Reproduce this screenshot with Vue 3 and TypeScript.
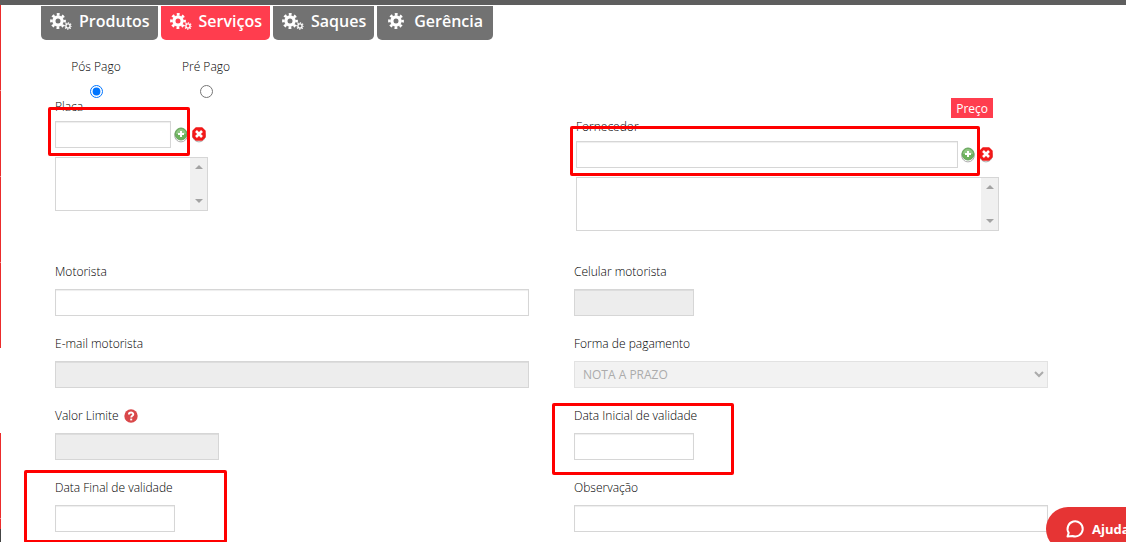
<script setup lang="ts">
import { ref } from 'vue'

interface Tab { name: string; double: boolean }
interface Picker { id: string; label: string }

const tabs: Tab[] = [
  { name: 'Produtos', double: true },
  { name: 'Serviços', double: true },
  { name: 'Saques', double: true },
  { name: 'Gerência', double: false },
]
const pickers: Picker[] = [
  { id: 'placa', label: 'Placa' },
  { id: 'fornecedor', label: 'Fornecedor' },
]
const active = ref('Serviços')
const payment = ref('pos')
</script>

<template>
  <div class="page">
    <aside class="rail" aria-hidden="true">
      <i class="menu"></i><i class="blank"></i><i class="menu short"></i><i class="foot"></i>
    </aside>
    <div class="main">
      <nav class="tabs">
        <button
          v-for="t in tabs"
          :key="t.name"
          type="button"
          :class="['tab', { active: t.name === active, single: !t.double }]"
          @click="active = t.name"
        >
          <svg :width="t.double ? 22 : 16" height="18" :viewBox="t.double ? '0 0 22 18' : '0 0 16 18'" aria-hidden="true">
            <g fill="none" stroke="#fff">
              <circle cx="8" cy="9" r="4.1" stroke-width="3.2" />
              <circle cx="8" cy="9" r="6.6" stroke-width="2.600" stroke-dasharray="2.800 2.384" stroke-dashoffset="1.4" />
              <template v-if="t.double">
                <circle cx="18" cy="14" r="2.1" stroke-width="1.4" />
                <circle cx="18" cy="14" r="3.2" stroke-width="1.2" stroke-dasharray="1.26 1.26" stroke-dashoffset="0.6" />
              </template>
            </g>
          </svg>
          <span>{{ t.name }}</span>
        </button>
      </nav>

      <form class="form" @submit.prevent>
        <div class="modes">
          <label class="mode">Pós Pago<input v-model="payment" type="radio" name="modo" value="pos" /></label>
          <label class="mode">Pré Pago<input v-model="payment" type="radio" name="modo" value="pre" /></label>
        </div>

        <div class="grid pickers">
          <div v-for="p in pickers" :key="p.id" :class="['picker', p.id]">
            <button v-if="p.id === 'fornecedor'" type="button" class="price">Preço</button>
            <label :for="p.id">{{ p.label }}</label>
            <div class="entry">
              <input :id="p.id" type="text" class="box" />
              <button type="button" class="icon" aria-label="Adicionar">
                <svg width="14" height="16" viewBox="0 0 14 16">
                  <circle cx="7" cy="8.6" r="6.3" fill="#fff" stroke="#999" stroke-width="0.8" />
                  <circle cx="7" cy="7" r="6" fill="#6cb25c" stroke="#69a35f" />
                  <path d="M2 7a5 5 0 0 1 10 0z" fill="#8fc783" />
                  <path d="M7 4v6M4 7h6" stroke="#fff" stroke-width="2" />
                </svg>
              </button>
              <button type="button" class="icon" aria-label="Remover">
                <svg width="14" height="16" viewBox="0 0 14 16">
                  <circle cx="7" cy="8.6" r="6.3" fill="#fff" stroke="#999" stroke-width="0.8" />
                  <path d="M4 1h6l3 3v6l-3 3H4l-3-3V4z" fill="#f51c1c" stroke="#f01818" stroke-width="1.400" stroke-linejoin="round" />
                  <path d="M4 4l6 6M10 4l-6 6" stroke="#fff" stroke-width="2.600" />
                </svg>
              </button>
              <div class="mark" aria-hidden="true"></div>
            </div>
            <div class="list">
              <select multiple :aria-label="p.label + ' selecionados'"></select>
              <div class="scroll" aria-hidden="true">
                <svg width="8" height="4" viewBox="0 0 8 4"><path d="M0 4L4 0l4 4z" fill="#a3a3a3" /></svg>
                <svg width="8" height="4" viewBox="0 0 8 4"><path d="M0 0l4 4 4-4z" fill="#a3a3a3" /></svg>
              </div>
            </div>
          </div>
        </div>

        <div class="grid fields">
          <div class="field">
            <label for="motorista">Motorista</label>
            <input id="motorista" type="text" class="box" />
          </div>
          <div class="field">
            <label for="celular">Celular motorista</label>
            <input id="celular" type="text" class="box date" disabled />
          </div>
          <div class="field">
            <label for="email">E-mail motorista</label>
            <input id="email" type="text" class="box" disabled />
          </div>
          <div class="field">
            <label for="forma">Forma de pagamento</label>
            <select id="forma" class="box pay" disabled><option>NOTA A PRAZO</option></select>
          </div>
          <div class="field">
            <label for="limite">Valor Limite
              <svg class="help" width="14" height="14" viewBox="0 0 14 14" aria-hidden="true">
                <circle cx="7" cy="7" r="6.700" fill="#d9484a" />
                <path d="M4.900 5.400C4.900 2.900 9.300 3 9.300 5.300 9.300 6.900 7.200 6.700 7.200 8.500" fill="none" stroke="#fff" stroke-width="1.900" />
                <path d="M6.200 9.600h2v1.800h-2z" fill="#fff" />
              </svg>
            </label>
            <input id="limite" type="text" class="box limit" disabled />
          </div>
          <div class="field">
            <label for="inicial">Data Inicial de validade</label>
            <input id="inicial" type="text" class="box date" />
            <div class="mark start" aria-hidden="true"></div>
          </div>
          <div class="field">
            <label for="final">Data Final de validade</label>
            <input id="final" type="text" class="box date" />
            <div class="mark end" aria-hidden="true"></div>
          </div>
          <div class="field">
            <label for="obs">Observação</label>
            <input id="obs" type="text" class="box" />
          </div>
        </div>
      </form>
    </div>

    <button type="button" class="chat">
      <svg width="20" height="20" viewBox="0 0 20 20" aria-hidden="true">
        <path d="M2.500 17.500l1.200-3.600A7.600 7.600 0 1 1 7.500 17z" fill="none" stroke="#fff" stroke-width="2" stroke-linejoin="round" />
      </svg>
      <span>Ajuda</span>
    </button>
  </div>
</template>

<style>
html, body { margin: 0; background: #fff; overflow: hidden; }
</style>

<style scoped>
* { box-sizing: border-box; }
.page {
  display: flex;
  height: 100vh;
  overflow: hidden;
  border-top: 5px solid #5e5e5e;
  font: 300 12px/18px "Open Sans", "Noto Sans", sans-serif;
  color: #000;
}
button, input, select { font-family: inherit; margin: 0; }
button { border: 0; padding: 0; cursor: pointer; }

.rail { display: flex; flex-direction: column; flex: none; width: 1px; }
.menu { flex: 343 0 0; background: repeating-linear-gradient(#eb2c2c 0 85px, #f58a8a 85px 86px); }
.menu.short { flex-grow: 96; }
.blank { flex: 85 0 0; }
.foot { flex: 13 0 0; background: #444; }

.main { flex: 1; min-width: 0; padding-top: 1px; }
.tabs { display: flex; gap: 3px; padding-left: 40px; }
.tab {
  display: flex;
  align-items: center;
  gap: 7px;
  height: 34px;
  padding: 0 8px 4px 9px;
  border-radius: 0 0 5px 5px;
  background: #727272;
  color: #fff;
  font-size: 16px;
  font-weight: 600;
}
.tab.single { gap: 10px; padding: 0 10px 4px 11px; }
.tab.active { background: #ff3d4e; }

.form { padding: 18px 78px 0 54px; }
.modes { display: flex; gap: 28px; }
.mode { display: flex; flex-direction: column; align-items: center; gap: 9px; width: 82px; }
.mode input { width: 13px; height: 13px; }

.grid { display: grid; grid-template-columns: 1fr 1fr; column-gap: 45px; }
.picker { display: flex; flex-direction: column; align-items: flex-start; }
.placa { width: 153px; }
.fornecedor { margin: 0 49px 0 2px; }
.price {
  align-self: flex-end;
  height: 20px;
  margin-right: 6px;
  padding: 0 5px;
  background: #ff3d4e;
  color: #fff;
  font-size: 12px;
  font-weight: 400;
}
.entry { position: relative; display: flex; align-items: center; align-self: stretch; gap: 3px; margin-top: 5px; padding-right: 2px; }
.fornecedor .entry { padding-right: 6px; }
.entry .box { flex: 1; min-width: 0; }
.icon { display: flex; background: none; }
.icon + .icon { margin-left: 1px; }
.box {
  display: block;
  width: 100%;
  height: 27px;
  padding: 0 8px;
  border: 1px solid #d6d6d6;
  border-radius: 0;
  outline: 0;
  background: #fff;
  box-shadow: inset 0 1px 1px #eee;
  font-size: 12px;
}
.box:disabled { background: #ededed; box-shadow: inset 0 1px 0 #ddd; }
.list { display: flex; align-self: stretch; height: 54px; margin-top: 9px; border: 1px solid #d6d6d6; }
.list select { flex: 1; min-width: 0; height: 100%; border: 0; outline: 0; overflow: hidden; background: #fff; }
.scroll { display: flex; flex-direction: column; align-items: center; justify-content: space-between; width: 17px; padding: 7px 0; background: #f0f0f0; }

.fields { row-gap: 19px; margin-top: 32px; }
.field { position: relative; }
.field label { display: flex; align-items: center; gap: 5px; margin-bottom: 8px; }
.date { width: 120px; }
.limit { width: 164px; }
.box.pay { padding: 0 4px; opacity: 0.7; color: #888; font-weight: 400; box-shadow: none; }

.mark { position: absolute; border: 3px solid #f00; border-radius: 2px; pointer-events: none; }
.entry .mark { inset: -14px 18px -8px -7px; }
.fornecedor .entry .mark { inset: -15px 19px -8px -6px; }
.mark.start { width: 182px; inset: -4px auto -15px -22px; }
.mark.end { width: 203px; inset: -9px auto -11px -31px; }

.chat {
  position: fixed;
  right: -24px;
  bottom: -9px;
  display: flex;
  align-items: center;
  gap: 7px;
  height: 44px;
  width: 104px;
  padding-left: 19px;
  border-radius: 22px;
  background: #e63434;
  color: #fff;
  font-size: 13px;
  font-weight: 700;
}
</style>
